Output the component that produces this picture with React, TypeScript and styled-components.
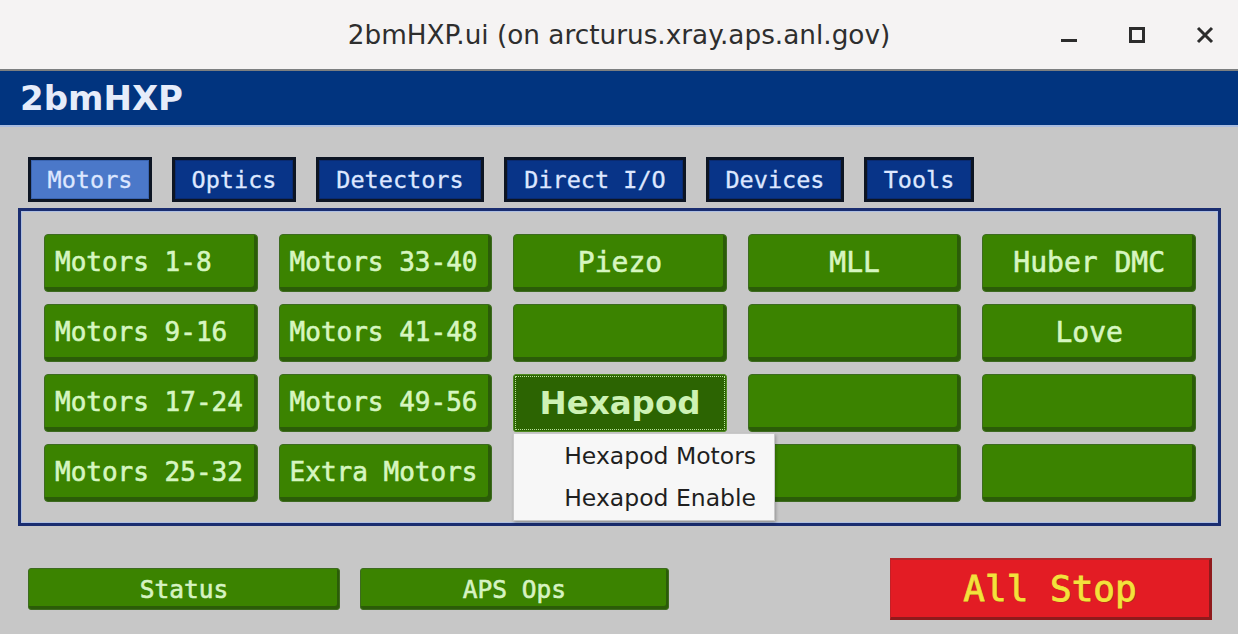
import styled, { createGlobalStyle } from "styled-components";

const GlobalStyle = createGlobalStyle`
  html, body {
    margin: 0;
    padding: 0;
    background: #c7c7c7;
  }
  * {
    box-sizing: border-box;
  }
`;

const Window = styled.div`
  width: 1238px;
  height: 634px;
  overflow: hidden;
  display: flex;
  flex-direction: column;
  background: #c7c7c7;
`;

const TitleBar = styled.div`
  height: 71px;
  flex-shrink: 0;
  display: grid;
  grid-template-columns: 1fr auto 1fr;
  align-items: center;
  background: #f5f3f3;
  border-bottom: 2px solid #7d7f80;
`;

const WindowTitle = styled.div`
  grid-column: 2;
  font-family: "DejaVu Sans", sans-serif;
  font-size: 26.3px;
  color: #2e2e2e;
`;

const Controls = styled.div`
  grid-column: 3;
  justify-self: end;
  display: flex;
  align-items: center;
  gap: 50px;
  padding-right: 24px;
`;

const ControlIcon = styled.svg`
  width: 18px;
  height: 18px;
  display: block;
`;

const Header = styled.div`
  height: 56px;
  flex-shrink: 0;
  display: flex;
  align-items: center;
  padding-left: 20px;
  background: #01347f;
  border-bottom: 2px solid #a9bce0;
  font-family: "DejaVu Sans", sans-serif;
  font-weight: bold;
  font-size: 34px;
  color: #e6ecfa;
`;

const Body = styled.div`
  flex: 1;
  padding: 30px 17px 0 18px;
  display: flex;
  flex-direction: column;
`;

const TabRow = styled.div`
  display: flex;
  gap: 20px;
  padding-left: 10px;
`;

const Tab = styled.div<{ $active?: boolean; $w: number }>`
  width: ${(p) => p.$w}px;
  height: 45px;
  display: flex;
  align-items: center;
  justify-content: center;
  border: 3px solid #0d1523;
  box-shadow: inset 0 0 0 1px ${(p) => (p.$active ? "#3a64b0" : "#0a2a70")};
  background: ${(p) => (p.$active ? "#4b78c9" : "#083488")};
  color: #dde7ff;
  font-family: "DejaVu Sans Mono", monospace;
  font-size: 23.5px;
  -webkit-text-stroke: 0.3px #dde7ff;
`;

const Panel = styled.div`
  margin-top: 6px;
  border: 3px solid #1a2d70;
  box-shadow: inset 0 0 0 1px #aebfe2;
  padding: 23px 22px 21px 23px;
`;

const ButtonGrid = styled.div`
  display: grid;
  grid-template-columns: repeat(5, 1fr);
  grid-auto-rows: 58px;
  column-gap: 21px;
  row-gap: 12px;
`;

const ShellButton = styled.div<{ $center?: boolean }>`
  display: flex;
  align-items: center;
  justify-content: ${(p) => (p.$center ? "center" : "flex-start")};
  padding-left: ${(p) => (p.$center ? 0 : 10)}px;
  padding-bottom: 2px;
  background: #3b8300;
  border: 1px solid #3d6a20;
  border-radius: 4px;
  box-shadow: inset -3px -4px 0 #2b5c08;
  color: #d6f6c0;
  font-family: "DejaVu Sans Mono", monospace;
  font-size: ${(p) => (p.$center ? 28 : 26)}px;
  -webkit-text-stroke: 0.6px #d6f6c0;
  white-space: nowrap;
`;

const MenuCell = styled.div`
  position: relative;
  display: flex;
`;

const HexapodButton = styled.div`
  flex: 1;
  display: flex;
  align-items: center;
  justify-content: center;
  background: #2c6402;
  border: 1px solid #4f8a22;
  border-radius: 3px;
  outline: 1px dotted #b9e59a;
  outline-offset: -3px;
  color: #cdf2b4;
  font-family: "DejaVu Sans", sans-serif;
  font-weight: bold;
  font-size: 32.5px;
`;

const Menu = styled.div`
  position: absolute;
  top: calc(100% + 1px);
  left: 0;
  width: 262px;
  padding: 1px 0;
  background: #f7f7f7;
  border: 1px solid #c9c9c9;
  box-shadow: 1px 2px 3px rgba(0, 0, 0, 0.25);
  z-index: 2;
`;

const MenuItem = styled.div`
  height: 42px;
  display: flex;
  align-items: center;
  padding-left: 50px;
  font-family: "DejaVu Sans", sans-serif;
  font-size: 23.5px;
  color: #1f1f1f;
`;

const Footer = styled.div`
  margin-top: 32px;
  display: flex;
  align-items: center;
  justify-content: space-between;
  padding: 0 9px 0 10px;
`;

const FooterGroup = styled.div`
  display: flex;
  gap: 20px;
`;

const FooterButton = styled.div<{ $w: number }>`
  width: ${(p) => p.$w}px;
  height: 42px;
  display: flex;
  align-items: center;
  justify-content: center;
  background: #3b8300;
  border: 1px solid #3d6a20;
  border-radius: 3px;
  box-shadow: inset -2px -3px 0 #2b5c08;
  color: #d6f3c2;
  font-family: "DejaVu Sans Mono", monospace;
  font-size: 24.5px;
  -webkit-text-stroke: 0.6px #d6f3c2;
`;

const StopButton = styled.div`
  width: 322px;
  height: 62px;
  display: flex;
  align-items: center;
  justify-content: center;
  background: #e31c24;
  border-top: 2px solid #b4272a;
  border-left: 1px solid #c42026;
  border-right: 3px solid #8f1a1c;
  border-bottom: 3px solid #8f1a1c;
  color: #f3e23c;
  font-family: "DejaVu Sans Mono", monospace;
  font-size: 36px;
  -webkit-text-stroke: 0.8px #f3e23c;
  text-shadow: 1px 1px 0 #a33a10;
`;

const tabs = [
  { label: "Motors", w: 124, active: true },
  { label: "Optics", w: 124 },
  { label: "Detectors", w: 168 },
  { label: "Direct I/O", w: 182 },
  { label: "Devices", w: 138 },
  { label: "Tools", w: 110 },
];

// row by row, five columns; "" = empty button, null = the hexapod menu button
const cells: (string | null)[][] = [
  ["Motors 1-8", "Motors 33-40", "Piezo", "MLL", "Huber DMC"],
  ["Motors 9-16", "Motors 41-48", "", "", "Love"],
  ["Motors 17-24", "Motors 49-56", null, "", ""],
  ["Motors 25-32", "Extra Motors", "", "", ""],
];

const App = () => {
  return (
    <Window>
      <GlobalStyle />
      <TitleBar>
        <WindowTitle>2bmHXP.ui (on arcturus.xray.aps.anl.gov)</WindowTitle>
        <Controls>
          <ControlIcon viewBox="0 0 18 18">
            <rect x="1" y="13" width="16" height="3" fill="#2c2c2c" />
          </ControlIcon>
          <ControlIcon viewBox="0 0 18 18">
            <rect x="2.5" y="2.5" width="13" height="13" fill="none" stroke="#2c2c2c" strokeWidth="3" />
          </ControlIcon>
          <ControlIcon viewBox="0 0 18 18">
            <path d="M2 2 L16 16 M16 2 L2 16" stroke="#2c2c2c" strokeWidth="3" />
          </ControlIcon>
        </Controls>
      </TitleBar>
      <Header>2bmHXP</Header>
      <Body>
        <TabRow>
          {tabs.map((t) => (
            <Tab key={t.label} $w={t.w} $active={t.active}>
              {t.label}
            </Tab>
          ))}
        </TabRow>
        <Panel>
          <ButtonGrid>
            {cells.flatMap((row, r) =>
              row.map((label, c) =>
                label === null ? (
                  <MenuCell key={`${r}-${c}`}>
                    <HexapodButton>Hexapod</HexapodButton>
                    <Menu>
                      <MenuItem>Hexapod Motors</MenuItem>
                      <MenuItem>Hexapod Enable</MenuItem>
                    </Menu>
                  </MenuCell>
                ) : (
                  <ShellButton key={`${r}-${c}`} $center={c >= 2}>
                    {label}
                  </ShellButton>
                )
              )
            )}
          </ButtonGrid>
        </Panel>
        <Footer>
          <FooterGroup>
            <FooterButton $w={312}>Status</FooterButton>
            <FooterButton $w={309}>APS Ops</FooterButton>
          </FooterGroup>
          <StopButton>All Stop</StopButton>
        </Footer>
      </Body>
    </Window>
  );
};

export default App;
